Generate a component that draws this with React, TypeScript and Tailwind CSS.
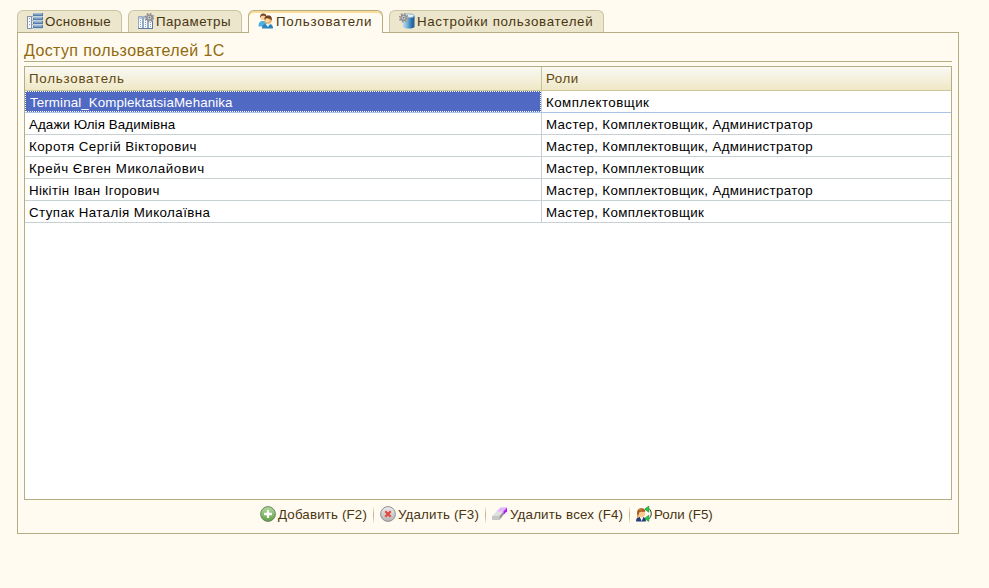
import type { ReactNode } from "react";

function ListIcon() {
  return (
    <svg width="16" height="16" viewBox="0 0 16 16" shapeRendering="crispEdges" className="shrink-0">
      <path d="M0.5 3.5h4v12h-4z" fill="#f4f8fd" stroke="#8292ac" />
      <path d="M2 5h1v1H2zM2 8h1v1H2zM2 11h1v1H2z" fill="#8fa3c2" />
      {[0, 4, 8, 12].map((y) => (
        <g key={y}>
          <rect x="6" y={y} width="10" height="3" fill="#567ba6" />
          <rect x="6" y={y} width="9" height="1" fill="#9cb9d5" />
          <rect x="7" y={y + 1} width="8" height="1" fill="#7fa3c8" />
          <rect x="6" y={y + 3} width="10" height="1" fill="#c9d3da" />
        </g>
      ))}
      <path d="M5 3h1v1H5zM5 7h1v1H5zM5 11h1v1H5zM5 15h1v1H5z" fill="#9fb2c8" />
    </svg>
  );
}

function Gear({ x, y }: { x: number; y: number }) {
  return (
    <g transform={`translate(${x} ${y})`}>
      <circle r="3.9" fill="none" stroke="#929292" strokeWidth="1.8" strokeDasharray="1.55 1.5" />
      <circle r="2.6" fill="#dedede" stroke="#929292" strokeWidth="1.6" />
      <circle r="1" fill="#77777d" />
    </g>
  );
}

function ParamsIcon() {
  return (
    <svg width="16" height="16" viewBox="0 0 16 16" className="shrink-0">
      <g fill="#f7fafe" stroke="#98a9c3">
        <path d="M0.5 3.5h4v12h-4zM5.5 3.5h4v12h-4zM10.5 3.5h4v12h-4z" />
      </g>
      <path d="M1 4h3v2H1zM6 4h3v2H6z" fill="#b6c9e2" />
      <path d="M2 7h1v1H2zM2 9h1v1H2zM2 11h1v1H2zM2 13h1v1H2zM7 7h1v1H7zM7 9h1v1H7zM7 11h1v1H7zM7 13h1v1H7zM12 9h1v1h-1zM12 11h1v1h-1zM12 13h1v1h-1z" fill="#8ba3c5" />
      <path d="M0 15.5h15M14.5 8v8" stroke="#5d7aa3" fill="none" />
      <Gear x={11.5} y={4.6} />
    </svg>
  );
}

function UsersIcon() {
  return (
    <svg width="16" height="16" viewBox="0 0 16 16" className="shrink-0">
      <path d="M0.5 13.5c0-3.8 1.3-5.4 4.5-5.4s4 1.9 4 5.4z" fill="#4db1df" />
      <circle cx="5.2" cy="4.3" r="2.9" fill="#f9d3a3" />
      <path d="M2.2 5C1.7 1.9 3.2.4 5.4.5 7.3.6 8.2 1.6 8.3 2.9 6 3.2 4.2 2.2 3.2 3.3z" fill="#774322" />
      <path d="M4 15.5c0-3.8 2-4.8 5.6-4.8S15 12 15 15.5z" fill="#2c84bd" />
      <path d="M7.5 10.9h4.7l-2.3 3z" fill="#e4f2f8" />
      <circle cx="10.2" cy="7.2" r="3.6" fill="#f4b36b" />
      <path d="M6.6 7C6 3.8 7.8 2.4 10.4 2.5c2.7 0 4 2 3.3 5.2C12.8 5.4 10.5 5.8 8.2 5z" fill="#70401f" />
      <circle cx="9.5" cy="7.5" r="1.8" fill="#ffdba9" />
    </svg>
  );
}

function DatabaseIcon() {
  return (
    <svg width="16" height="16" viewBox="0 0 16 16" className="shrink-0">
      <defs>
        <linearGradient id="cyl">
          <stop offset="0" stopColor="#b9d9ee" />
          <stop offset=".35" stopColor="#7db6dc" />
          <stop offset=".7" stopColor="#3479b0" />
          <stop offset="1" stopColor="#1f578c" />
        </linearGradient>
      </defs>
      <path d="M4 3v10.5c0 2.8 11.5 2.8 11.5 0V3z" fill="url(#cyl)" />
      <ellipse cx="9.8" cy="2.8" rx="5.6" ry="1.9" fill="#e2f0f8" stroke="#6c9bc0" strokeWidth=".7" />
      <circle cx="4.5" cy="4.8" r="4.3" fill="#e8e5d5" fillOpacity=".6" />
      <Gear x={4.6} y={4.8} />
    </svg>
  );
}

function AddIcon() {
  return (
    <svg width="16" height="16" viewBox="0 0 16 16" className="shrink-0">
      <defs>
        <linearGradient id="add" x2="0" y2="1">
          <stop stopColor="#b4dc9c" />
          <stop offset="1" stopColor="#5da044" />
        </linearGradient>
      </defs>
      <circle cx="8" cy="8" r="7.4" fill="url(#add)" stroke="#718668" />
      <path d="M8 4v8M4 8h8" stroke="#fff" strokeWidth="2.3" />
    </svg>
  );
}

function DeleteIcon() {
  return (
    <svg width="16" height="16" viewBox="0 0 16 16" className="shrink-0">
      <defs>
        <linearGradient id="del" x2="0" y2="1">
          <stop stopColor="#ededed" />
          <stop offset="1" stopColor="#b5b5b5" />
        </linearGradient>
      </defs>
      <circle cx="8" cy="8" r="7.4" fill="url(#del)" stroke="#909090" />
      <path d="M5.3 5.3l5.4 5.4M10.7 5.3l-5.4 5.4" stroke="#e2483e" strokeWidth="2.2" />
    </svg>
  );
}

function EraserIcon() {
  return (
    <svg width="16" height="16" viewBox="0 0 16 16" className="shrink-0">
      <path d="M0 10L8.5 1.5H15L7.5 10z" fill="#e0e0e0" />
      <path d="M4.5 5.5l4-4H15l-3.6 4z" fill="#e3b6fa" />
      <path d="M0 10h7.5v4H0z" fill="#c6c6c6" />
      <path d="M7.5 10l3.9-4.5V9L7.5 14z" fill="#959595" />
      <path d="M11.4 5.5l3.6-4v3.7L11.4 9z" fill="#b01eff" />
    </svg>
  );
}

function RolesIcon() {
  return (
    <svg width="16" height="16" viewBox="0 0 16 16" className="shrink-0">
      <path d="M0 15.5c0-3.2 1.5-4.7 5-4.7s5 1.5 5 4.7z" fill="#263e75" />
      <path d="M3.8 11h3.4l-1.4 4.3z" fill="#fff" />
      <circle cx="5.6" cy="7.6" r="3.6" fill="#f9cb93" />
      <path d="M1.2 9C.6 4.4 2.2 2.3 5.3 2.3c2.4 0 3.8 1.2 4 3.4C7 6.2 4.4 5.2 3.2 6.6L2.6 9z" fill="#a65820" />
      <path d="M1 9h1.6v3H1zM3 3.4h3v1H3z" fill="#dc963f" />
      <path d="M13 2.6c3 2.6 3 7.4 0 10.2" fill="none" stroke="#153d20" strokeWidth="1" />
      <path d="M8.6 3.2L12.8 0v6.3zM8.6 12.4l4.2-3.2v6.3z" fill="#13d63f" stroke="#146426" strokeWidth=".5" />
    </svg>
  );
}

type TabProps = { icon: ReactNode; label: string; className: string; active?: boolean };

function Tab({ icon, label, className, active }: TabProps) {
  return (
    <button
      className={`flex items-start overflow-hidden rounded-t-[6px] border border-b-0 pt-[2px] pl-[9px] text-left ${
        active
          ? "h-[23px] border-[#b5ad84] bg-[#fffbf0] shadow-[inset_0_2px_0_#fbdc98]"
          : "h-[22px] border-[#cac4a2] bg-[#ebe6cc]"
      } ${className}`}
    >
      {icon}
      <span className="ml-[2px] leading-[17px]">{label}</span>
    </button>
  );
}

const rows = [
  ["Terminal_KomplektatsiaMehanika", "Комплектовщик", "tracking-[0.11px]", "tracking-[0.46px]"],
  ["Адажи Юлія Вадимівна", "Мастер, Комплектовщик, Администратор", "tracking-[0.1px]", "tracking-[0.35px]"],
  ["Коротя Сергій Вікторович", "Мастер, Комплектовщик, Администратор", "tracking-[0.43px]", "tracking-[0.35px]"],
  ["Крейч Євген Миколайович", "Мастер, Комплектовщик", "tracking-[0.53px]", "tracking-[0.35px]"],
  ["Нікітін Іван Ігорович", "Мастер, Комплектовщик, Администратор", "tracking-[0.39px]", "tracking-[0.35px]"],
  ["Ступак Наталія Миколаївна", "Мастер, Комплектовщик", "tracking-[0.42px]", "tracking-[0.35px]"],
];

function Action({ icon, label, className }: { icon: ReactNode; label: string; className: string }) {
  return (
    <button className={`flex items-center gap-[2px] text-left ${className}`}>
      {icon}
      <span>{label}</span>
    </button>
  );
}

function Divider() {
  return <div className="mr-[6px] h-[18px] w-px bg-linear-to-b from-[#fffbf0] via-[#b5ad84] to-[#fffbf0]" />;
}

export default function App() {
  return (
    <main className="h-[588px] w-[989px] overflow-hidden bg-[#fffbf0] pt-[10px] pl-[17px] font-['Liberation_Sans',Arial,sans-serif] text-[13.33px] whitespace-nowrap text-[#4a3511]">
      <nav className="relative z-10 -mb-px flex h-[23px] items-start gap-[6px]">
        <Tab icon={<ListIcon />} label="Основные" className="w-[105px] tracking-[0.35px]" />
        <Tab icon={<ParamsIcon />} label="Параметры" className="w-[114px] tracking-[0.43px]" />
        <Tab icon={<UsersIcon />} label="Пользователи" className="w-[135px] tracking-[0.77px]" active />
        <Tab icon={<DatabaseIcon />} label="Настройки пользователей" className="w-[215px] tracking-[0.66px]" />
      </nav>
      <section className="h-[502px] w-[942px] border border-[#b5ad84] px-[6px]">
        <h1 className="h-[29px] border-b border-[#b5ad84] pt-[7px] text-[16px] leading-[21px] tracking-[0.38px] text-[#91690f]">
          Доступ пользователей 1С
        </h1>
        <div className="mt-[4px] h-[434px] border border-[#b5ad84] bg-white">
          <div className="flex h-[24px] border-b border-[#cdc59b] bg-linear-to-b from-[#f9f9f3] to-[#efe8c6] leading-[23px] text-[#63480f]">
            <div className="w-[517px] border-r border-[#c9c298] pl-[4px] tracking-[0.77px]">Пользователь</div>
            <div className="pl-[4px] tracking-[0.5px]">Роли</div>
          </div>
          {rows.map(([name, roles, nameClass, rolesClass], i) => (
            <div
              key={name}
              className={`flex h-[22px] border-b leading-[24px] text-black ${i === 0 ? "border-[#a9c4e6]" : "border-[#c9d0d3]"}`}
            >
              <div className="w-[517px] border-r border-[#c9d0d3]">
                <div
                  className={`h-[21px] pl-[4px] ${nameClass} ${
                    i === 0 ? "border border-dotted border-white bg-[#5069c2] leading-[22px] text-white" : ""
                  }`}
                >
                  {name}
                </div>
              </div>
              <div className={`pl-[4px] ${rolesClass}`}>{roles}</div>
            </div>
          ))}
        </div>
        <div className="flex h-[29px] items-center pl-[236px]">
          <Action icon={<AddIcon />} label="Добавить (F2)" className="w-[113px] tracking-[0.15px]" />
          <Divider />
          <Action icon={<DeleteIcon />} label="Удалить (F3)" className="w-[105px] tracking-[0.17px]" />
          <Divider />
          <Action icon={<EraserIcon />} label="Удалить всех (F4)" className="w-[137px] tracking-[0.18px]" />
          <Divider />
          <Action icon={<RolesIcon />} label="Роли (F5)" className="w-[80px]" />
        </div>
      </section>
    </main>
  );
}
